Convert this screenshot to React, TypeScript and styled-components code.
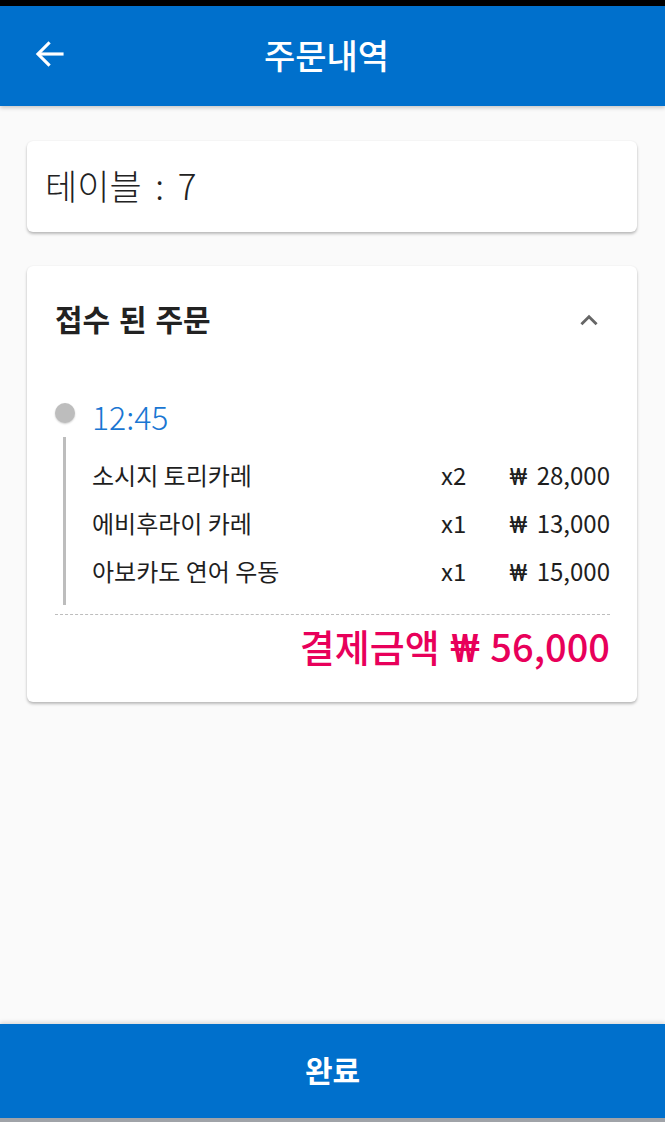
import React from "react";
import styled, { createGlobalStyle } from "styled-components";

const Global = createGlobalStyle`
  html, body { margin: 0; padding: 0; }
  body {
    background: #fafafa;
    font-family: "Noto Sans CJK KR", "Noto Sans", Roboto, sans-serif;
    color: #212121;
  }
  #root { height: 1122px; }
`;

const Screen = styled.div`
  height: 1122px;
  display: flex;
  flex-direction: column;
  background: #fafafa;
`;

const StatusBar = styled.div`
  height: 6px;
  background: #000;
`;

const Header = styled.header`
  height: 100px;
  background: #0070cc;
  display: flex;
  align-items: center;
  box-shadow: 0 2px 4px rgba(0,0,0,0.2);
  padding-bottom: 4px;
  box-sizing: border-box;
`;

const BackButton = styled.button`
  background: none;
  border: none;
  padding: 0;
  margin-left: 32px;
  width: 36px;
  height: 36px;
  display: flex;
  align-items: center;
  justify-content: center;
  color: #fff;
`;

const Title = styled.h1`
  flex: 1;
  margin: 0;
  padding-right: 80px;
  text-align: center;
  color: #fff;
  font-size: 34px;
  font-weight: 500;
`;

const Content = styled.main`
  flex: 1;
  padding: 35px 28px 0 27px;
  display: flex;
  flex-direction: column;
  gap: 34px;
`;

const Card = styled.section`
  background: #fff;
  border-radius: 6px;
  box-shadow: 0 2px 3px rgba(0,0,0,0.25), 0 0 2px rgba(0,0,0,0.06);
`;

const TableCard = styled(Card)`
  height: 91px;
  box-sizing: border-box;
  display: flex;
  align-items: center;
  padding: 0 0 4px 18px;
  font-size: 35px;
  font-weight: 300;
  word-spacing: 6px;
  color: #222;
`;

const OrderCard = styled(Card)`
  padding: 0 27px 0 28px;
`;

const OrderHeader = styled.div`
  height: 110px;
  box-sizing: border-box;
  padding-bottom: 6px;
  display: flex;
  align-items: center;
  justify-content: space-between;
`;

const OrderTitle = styled.h2`
  margin: 0;
  font-size: 30px;
  font-weight: 700;
  word-spacing: 2px;
  color: #222;
`;

const Chevron = styled.span`
  display: flex;
  color: #666;
  margin: 6px 8px 0 0;
`;

const Timeline = styled.div`
  position: relative;
  padding-left: 37px;
  padding-top: 20px;
  padding-bottom: 20px;
`;

const Dot = styled.span`
  position: absolute;
  left: 0;
  top: 27px;
  width: 20px;
  height: 20px;
  border-radius: 50%;
  background: #bdbdbd;
  box-shadow: 0 1px 2px rgba(0,0,0,0.2);
`;

const Rail = styled.span`
  position: absolute;
  left: 8px;
  top: 61px;
  bottom: 9px;
  width: 3px;
  background: #bdbdbd;
`;

const Time = styled.div`
  color: #1976d2;
  font-size: 32px;
  font-weight: 300;
  line-height: 40px;
`;

const Items = styled.div`
  margin-top: 14px;
  display: flex;
  flex-direction: column;
`;

const ItemRow = styled.div`
  display: grid;
  grid-template-columns: 1fr 62px 108px;
  align-items: center;
  height: 48px;
  font-size: 24px;
  color: #1e1e1e;
`;

const Qty = styled.span`
  margin-left: 1px;
`;

const Price = styled.span`
  text-align: right;
  white-space: nowrap;
  word-spacing: 4px;
`;

const Won = styled.span`
  font-family: Roboto, "Noto Sans CJK KR", sans-serif;
`;

const Divider = styled.hr`
  margin: 0;
  border: none;
  border-top: 1.5px dashed #bdbdbd;
`;

const Total = styled.div`
  height: 68px;
  line-height: 62px;
  text-align: right;
  white-space: nowrap;
  font-size: 38px;
  font-weight: 500;
  word-spacing: 2px;
  color: #e8005a;
  margin-bottom: 19px;
`;

const Footer = styled.button`
  height: 98px;
  box-sizing: border-box;
  border: none;
  background: #0070cc;
  color: #fff;
  font-family: inherit;
  font-size: 30px;
  font-weight: 700;
  box-shadow: 0 -2px 4px rgba(0,0,0,0.12);
  border-bottom: 4px solid #a0a3a8;
  padding: 0 0 4px;
`;

const items = [
  { name: "소시지 토리카레", qty: 2, price: "28,000" },
  { name: "에비후라이 카레", qty: 1, price: "13,000" },
  { name: "아보카도 연어 우동", qty: 1, price: "15,000" },
];

export default function App() {
  return (
    <>
      <Global />
      <Screen>
        <StatusBar />
        <Header>
          <BackButton aria-label="back">
            <svg width="36" height="36" viewBox="0 0 24 24" fill="none" stroke="#fff" strokeWidth="2.1" strokeLinecap="square">
              <path d="M20 12H5" />
              <path d="M11 5l-7 7 7 7" />
            </svg>
          </BackButton>
          <Title>주문내역</Title>
        </Header>
        <Content>
          <TableCard>테이블 : 7</TableCard>
          <OrderCard>
            <OrderHeader>
              <OrderTitle>접수 된 주문</OrderTitle>
              <Chevron>
                <svg width="26" height="26" viewBox="0 0 24 24" fill="none" stroke="#666" strokeWidth="2.6">
                  <path d="M5 15l7-7 7 7" />
                </svg>
              </Chevron>
            </OrderHeader>
            <Timeline>
              <Dot />
              <Rail />
              <Time>12:45</Time>
              <Items>
                {items.map((it) => (
                  <ItemRow key={it.name}>
                    <span>{it.name}</span>
                    <Qty>x{it.qty}</Qty>
                    <Price><Won>₩</Won> {it.price}</Price>
                  </ItemRow>
                ))}
              </Items>
            </Timeline>
            <Divider />
            <Total>결제금액 <Won>₩</Won> 56,000</Total>
          </OrderCard>
        </Content>
        <Footer>완료</Footer>
      </Screen>
    </>
  );
}
